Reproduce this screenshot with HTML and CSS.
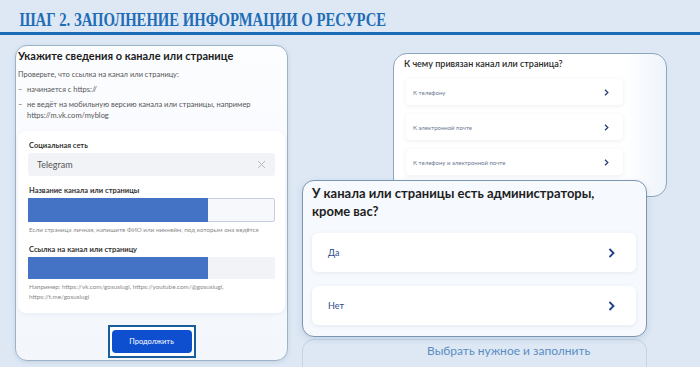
FILE: index.html
```html
<!DOCTYPE html>
<html lang="ru">
<head>
    <meta charset="UTF-8">
    <meta name="viewport" content="width=device-width, initial-scale=1.0">
    <title>Шаг 2. Заполнение информации о ресурсе</title>
    <link rel="stylesheet" href="styles.css">
</head>
<body>
    <header class="step">
        <h1 class="step-title">ШАГ 2. ЗАПОЛНЕНИЕ ИНФОРМАЦИИ О РЕСУРСЕ</h1>
    </header>

    <main class="screens">
        <section class="card card-form">
            <h2 class="form-title">Укажите сведения о канале или странице</h2>
            <p class="note">Проверьте, что ссылка на канал или страницу:</p>
            <ul class="rules">
                <li>начинается с https://</li>
                <li>не ведёт на мобильную версию канала или страницы, например https://m.vk.com/myblog</li>
            </ul>

            <div class="fields">
                <label class="field-label">Социальная сеть</label>
                <div class="select">
                    <span>Telegram</span>
                    <svg class="clear" width="9" height="9" viewBox="0 0 9 9">
                        <path d="M1 1 L8 8 M8 1 L1 8" stroke="#b3b8c0" stroke-width="1" fill="none"/>
                    </svg>
                </div>

                <label class="field-label">Название канала или страницы</label>
                <div class="input input-bordered">
                    <span class="redacted"></span>
                </div>
                <p class="hint">Если страница личная, напишите ФИО или никнейм, под которым она ведётся</p>

                <label class="field-label">Ссылка на канал или страницу</label>
                <div class="input input-filled">
                    <span class="redacted"></span>
                </div>
                <p class="hint">Например: https://vk.com/gosuslugi, https://youtube.com/@gosuslugi,<br>https://t.me/gosuslugi</p>
            </div>

            <div class="submit">
                <span class="submit-frame">
                    <button class="btn-primary">Продолжить</button>
                </span>
            </div>
        </section>

        <div class="stack">
            <section class="card card-link">
                <h3 class="link-title">К чему привязан канал или страница?</h3>
                <ul class="options options-small">
                    <li>К телефону <svg width="5" height="7" viewBox="0 0 5 7"><path d="M1 0.8 L3.8 3.5 L1 6.2" stroke="#2b3f78" stroke-width="1.3" fill="none"/></svg></li>
                    <li>К электронной почте <svg width="5" height="7" viewBox="0 0 5 7"><path d="M1 0.8 L3.8 3.5 L1 6.2" stroke="#2b3f78" stroke-width="1.3" fill="none"/></svg></li>
                    <li>К телефону и электронной почте <svg width="5" height="7" viewBox="0 0 5 7"><path d="M1 0.8 L3.8 3.5 L1 6.2" stroke="#2b3f78" stroke-width="1.3" fill="none"/></svg></li>
                </ul>
            </section>

            <section class="card card-admins">
                <h3 class="admins-title">У канала или страницы есть администраторы, кроме вас?</h3>
                <ul class="options options-large">
                    <li>Да <svg width="7" height="10" viewBox="0 0 7 10"><path d="M1.5 1 L5.5 5 L1.5 9" stroke="#1f3d8a" stroke-width="1.8" fill="none"/></svg></li>
                    <li>Нет <svg width="7" height="10" viewBox="0 0 7 10"><path d="M1.5 1 L5.5 5 L1.5 9" stroke="#1f3d8a" stroke-width="1.8" fill="none"/></svg></li>
                </ul>
            </section>

            <p class="caption">Выбрать нужное и заполнить</p>
        </div>
    </main>
</body>
</html>
```

FILE: styles.css
```css
body {
    margin: 0;
    width: 700px;
    height: 367px;
    overflow: hidden;
    background-color: #dde8f4;
    font-family: Lato, "Open Sans", sans-serif;
    color: #222;
}

.step {
    border-bottom: 3px solid #1b6cb4;
}

/* the banner font is a narrow serif, so squeeze Times horizontally */
.step-title {
    margin: 0;
    padding: 8px 0 0 25px;
    height: 24px;
    line-height: 24px;
    font-family: "Liberation Serif", serif;
    font-size: 19px;
    font-weight: bold;
    color: #1f6db6;
    white-space: nowrap;
    transform: scaleX(0.775);
    transform-origin: 0 0;
}

.screens {
    display: flex;
    align-items: flex-start;
}

.card {
    box-sizing: border-box;
    border: 1px solid #9db1c7;
    border-radius: 12px;
}

/* left screen: form */

.card-form {
    margin: 10px 0 0 15px;
    width: 273px;
    height: 316px;
    padding: 2px 2px 0;
    background: linear-gradient(#fcfdff, #f3f7fc);
    box-shadow: 0 1px 4px rgba(60, 90, 130, 0.15);
}

.form-title {
    margin: 0;
    line-height: 15px;
    font-size: 11px;
    font-weight: bold;
    color: #1c1c1c;
}

.note {
    margin: 6px 0 0;
    font-size: 7.5px;
    line-height: 11px;
    color: #555;
}

.rules {
    list-style: none;
    margin: 4px 0 0;
    padding: 0;
    font-size: 7.5px;
    line-height: 11px;
    color: #555;
}

.rules li {
    position: relative;
    padding-left: 9px;
    margin-bottom: 4px;
}

.rules li::before {
    content: "–";
    position: absolute;
    left: 0;
}

.fields {
    margin-top: 10px;
    padding: 10px 10px 11px 10px;
    background-color: #fff;
    border-radius: 8px;
    box-shadow: 0 1px 4px rgba(60, 90, 130, 0.08);
}

.field-label {
    display: block;
    height: 10px;
    line-height: 10px;
    margin-bottom: 2px;
    font-size: 7.5px;
    font-weight: bold;
    color: #333;
    padding-left: 1px;
}

.select {
    display: flex;
    align-items: center;
    justify-content: space-between;
    height: 23px;
    padding: 0 9px 0 9px;
    margin-bottom: 10px;
    background-color: #f1f3f6;
    border-radius: 3px;
    font-size: 9px;
    color: #555;
}

.input {
    box-sizing: border-box;
    display: flex;
    border-radius: 2px;
}

.input-bordered {
    height: 24px;
    border: 1px solid #c3cfdf;
    background-color: #f6f8fb;
}

.input-filled {
    height: 22px;
    background-color: #f1f3f6;
}

.redacted {
    width: 180px;
    background-color: #4472c4;
}

.input-bordered .redacted {
    margin: -1px 0 -1px -1px;
}

.hint {
    margin: 3px 0 0;
    padding-left: 1px;
    font-size: 6.3px;
    line-height: 10px;
    color: #8a8a8a;
}

.hint + .field-label {
    margin-top: 10px;
}

.submit {
    margin-top: 12px;
    text-align: center;
}

.submit-frame {
    display: inline-block;
    border: 2px solid #1a5d9c;
    padding: 3px 2px;
    background-color: #fff;
    line-height: 0;
}

.btn-primary {
    width: 80px;
    height: 23px;
    border: none;
    border-radius: 4px;
    background-color: #0e4fd0;
    color: #fff;
    font-family: Lato, sans-serif;
    font-size: 7.5px;
}

/* right screens */

.stack {
    margin: 18px 0 0 14px;
    width: 365px;
}

.card-link {
    margin-left: 91px;
    width: 274px;
    height: 144px;
    padding: 3px 0 0 10px;
    border-color: #8ea5bf;
    border-radius: 14px;
    background: linear-gradient(to right, #fff 85%, #eef4fb);
}

.link-title {
    margin: 0;
    line-height: 14px;
    font-size: 9px;
    font-weight: 600;
    color: #2a2a2a;
}

.options {
    list-style: none;
    margin: 0;
    padding: 0;
}

.options li {
    display: flex;
    align-items: center;
    justify-content: space-between;
    background-color: #fff;
    box-shadow: 0 1px 4px rgba(40, 70, 120, 0.09);
}

.options-small {
    margin: 8px 0 0 2px;
    width: 217px;
}

.options-small li {
    height: 26px;
    padding: 0 14px 0 7px;
    margin-bottom: 9px;
    border-radius: 4px;
    font-size: 6px;
    color: #6b7893;
}

.card-admins {
    position: relative;
    margin-top: -17px;
    width: 345px;
    height: 157px;
    padding: 3px 10px 0 9px;
    border-color: #7d96b2;
    background-color: #f6f9fd;
    box-shadow: 0 2px 6px rgba(50, 80, 120, 0.15);
}

.admins-title {
    margin: 0;
    max-width: 295px;
    line-height: 18px;
    font-size: 13px;
    font-weight: bold;
    color: #1e1e1e;
}

.options-large {
    margin-top: 13px;
}

.options-large li {
    height: 39px;
    padding: 0 21px 0 16px;
    margin-bottom: 14px;
    border-radius: 6px;
    font-size: 9px;
    color: #2c4c8a;
}

.caption {
    box-sizing: border-box;
    margin: 2px 0 0;
    width: 345px;
    height: 40px;
    padding: 3px 0 0 124px;
    line-height: 16px;
    border: 1px solid rgba(140, 165, 195, 0.3);
    border-bottom: none;
    border-radius: 12px 12px 0 0;
    font-size: 12px;
    color: #5a8cc3;
}
```
